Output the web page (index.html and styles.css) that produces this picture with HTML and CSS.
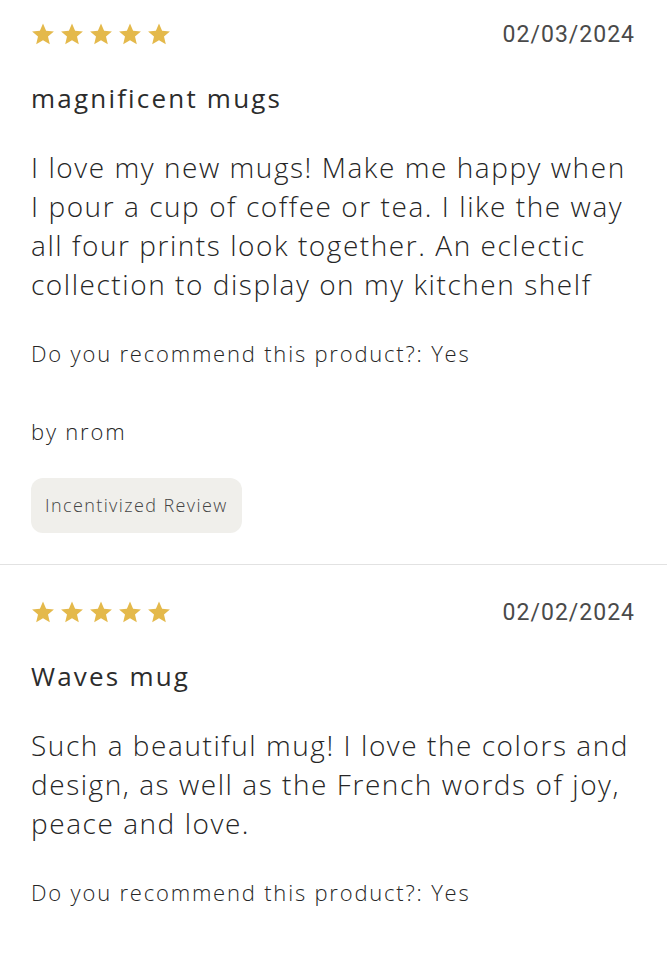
FILE: index.html
```html
<!DOCTYPE html>
<html lang="en">
<head>
<meta charset="utf-8">
<link rel="stylesheet" href="styles.css">
</head>
<body>
<div class="reviews">
  <article class="review">
    <div class="review-head">
      <div class="stars">
        <svg class="star" viewBox="0 0 24 24"><path d="M12 1.5l3.1 7.2 7.8.7-5.9 5.2 1.8 7.7L12 18.2l-6.8 4.1 1.8-7.7-5.9-5.2 7.8-.7z"/></svg>
        <svg class="star" viewBox="0 0 24 24"><path d="M12 1.5l3.1 7.2 7.8.7-5.9 5.2 1.8 7.7L12 18.2l-6.8 4.1 1.8-7.7-5.9-5.2 7.8-.7z"/></svg>
        <svg class="star" viewBox="0 0 24 24"><path d="M12 1.5l3.1 7.2 7.8.7-5.9 5.2 1.8 7.7L12 18.2l-6.8 4.1 1.8-7.7-5.9-5.2 7.8-.7z"/></svg>
        <svg class="star" viewBox="0 0 24 24"><path d="M12 1.5l3.1 7.2 7.8.7-5.9 5.2 1.8 7.7L12 18.2l-6.8 4.1 1.8-7.7-5.9-5.2 7.8-.7z"/></svg>
        <svg class="star" viewBox="0 0 24 24"><path d="M12 1.5l3.1 7.2 7.8.7-5.9 5.2 1.8 7.7L12 18.2l-6.8 4.1 1.8-7.7-5.9-5.2 7.8-.7z"/></svg>
      </div>
      <span class="date">02/03/2024</span>
    </div>
    <h2 class="title">magnificent mugs</h2>
    <p class="body">I love my new mugs! Make me happy when I pour a cup of coffee or tea. I like the way all four prints look together. An eclectic collection to display on my kitchen shelf</p>
    <p class="meta">Do you recommend this product?: Yes</p>
    <p class="meta author">by nrom</p>
    <span class="badge">Incentivized Review</span>
  </article>
  <article class="review">
    <div class="review-head">
      <div class="stars">
        <svg class="star" viewBox="0 0 24 24"><path d="M12 1.5l3.1 7.2 7.8.7-5.9 5.2 1.8 7.7L12 18.2l-6.8 4.1 1.8-7.7-5.9-5.2 7.8-.7z"/></svg>
        <svg class="star" viewBox="0 0 24 24"><path d="M12 1.5l3.1 7.2 7.8.7-5.9 5.2 1.8 7.7L12 18.2l-6.8 4.1 1.8-7.7-5.9-5.2 7.8-.7z"/></svg>
        <svg class="star" viewBox="0 0 24 24"><path d="M12 1.5l3.1 7.2 7.8.7-5.9 5.2 1.8 7.7L12 18.2l-6.8 4.1 1.8-7.7-5.9-5.2 7.8-.7z"/></svg>
        <svg class="star" viewBox="0 0 24 24"><path d="M12 1.5l3.1 7.2 7.8.7-5.9 5.2 1.8 7.7L12 18.2l-6.8 4.1 1.8-7.7-5.9-5.2 7.8-.7z"/></svg>
        <svg class="star" viewBox="0 0 24 24"><path d="M12 1.5l3.1 7.2 7.8.7-5.9 5.2 1.8 7.7L12 18.2l-6.8 4.1 1.8-7.7-5.9-5.2 7.8-.7z"/></svg>
      </div>
      <span class="date">02/02/2024</span>
    </div>
    <h2 class="title">Waves mug</h2>
    <p class="body">Such a beautiful mug! I love the colors and design, as well as the French words of joy, peace and love.</p>
    <p class="meta">Do you recommend this product?: Yes</p>
    <p class="meta author">by mariannek</p>
  </article>
</div>
</body>
</html>
```
FILE: styles.css
```css
html, body {
  margin: 0;
  padding: 0;
  background: #fff;
}
body {
  font-family: "Open Sans", "Noto Sans", sans-serif;
  color: #2f2f2f;
  overflow: hidden;
  height: 960px;
}
.reviews {
  margin-top: -13px;
}
.review {
  padding: 35px 31px 31px 31px;
  border-bottom: 1px solid #e2e2e2;
}
.review-head {
  display: flex;
  justify-content: space-between;
  align-items: center;
  height: 24px;
}
.stars {
  display: flex;
  gap: 5px;
}
.star {
  width: 24px;
  height: 24px;
  fill: #e4b94b;
}
.date {
  font-family: Roboto, "Liberation Sans", sans-serif;
  font-size: 23px;
  color: #4a4a4a;
  letter-spacing: 1px;
  margin-right: 1px;
}
.title {
  margin: 36px 0 0 0;
  font-size: 26px;
  font-weight: 500;
  line-height: 32px;
  letter-spacing: 2.2px;
  color: #2c2c2c;
}
.body {
  margin: 34px -4px 0 0;
  font-size: 28px;
  line-height: 39px;
  font-weight: 300;
  letter-spacing: 1.55px;
  color: #262626;
}
.meta {
  margin: 34px 0 0 0;
  font-size: 22px;
  line-height: 30px;
  font-weight: 300;
  letter-spacing: 1.8px;
  color: #262626;
}
.author {
  margin-top: 48px;
}
.badge {
  display: inline-block;
  margin-top: 32px;
  padding: 14px 14px;
  font-size: 18px;
  line-height: 27px;
  font-weight: 300;
  letter-spacing: 1.4px;
  color: #444;
  background: #f0efeb;
  border-radius: 12px;
}
```
